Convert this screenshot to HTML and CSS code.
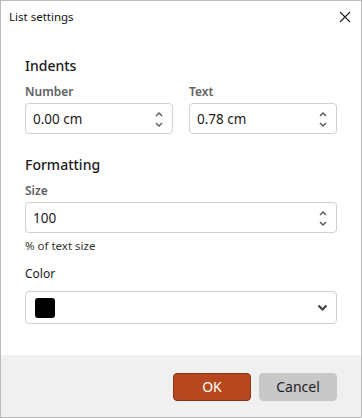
FILE: index.html
```html
<!DOCTYPE html>
<html lang="en">
<head>
    <meta charset="UTF-8">
    <meta name="viewport" content="width=device-width, initial-scale=1.0">
    <title>List settings</title>
    <link rel="stylesheet" href="styles.css">
</head>
<body>

    <div class="dialog">
        <div class="title-bar">
            <span class="title">List settings</span>
            <span class="close">
                <svg width="12" height="12" viewBox="0 0 12 12"><path d="M1 1 L11 11 M11 1 L1 11" stroke="#222" stroke-width="1.1" fill="none"/></svg>
            </span>
        </div>

        <div class="content">
            <h3 class="section">Indents</h3>
            <div class="row">
                <div class="field">
                    <label class="label">Number</label>
                    <div class="spin">
                        <span class="value">0.00 cm</span>
                        <span class="arrows">
                            <svg width="8" height="5" viewBox="0 0 8 5"><path d="M1 4 L4 1 L7 4" stroke="#555" stroke-width="1.4" fill="none"/></svg>
                            <svg width="8" height="5" viewBox="0 0 8 5"><path d="M1 1 L4 4 L7 1" stroke="#555" stroke-width="1.4" fill="none"/></svg>
                        </span>
                    </div>
                </div>
                <div class="field">
                    <label class="label">Text</label>
                    <div class="spin">
                        <span class="value">0.78 cm</span>
                        <span class="arrows">
                            <svg width="8" height="5" viewBox="0 0 8 5"><path d="M1 4 L4 1 L7 4" stroke="#555" stroke-width="1.4" fill="none"/></svg>
                            <svg width="8" height="5" viewBox="0 0 8 5"><path d="M1 1 L4 4 L7 1" stroke="#555" stroke-width="1.4" fill="none"/></svg>
                        </span>
                    </div>
                </div>
            </div>

            <h3 class="section second">Formatting</h3>
            <label class="label">Size</label>
            <div class="spin">
                <span class="value">100</span>
                <span class="arrows">
                    <svg width="8" height="5" viewBox="0 0 8 5"><path d="M1 4 L4 1 L7 4" stroke="#555" stroke-width="1.4" fill="none"/></svg>
                    <svg width="8" height="5" viewBox="0 0 8 5"><path d="M1 1 L4 4 L7 1" stroke="#555" stroke-width="1.4" fill="none"/></svg>
                </span>
            </div>
            <div class="hint">% of text size</div>

            <label class="label color-label">Color</label>
            <div class="select">
                <span class="swatch"></span>
                <svg width="11" height="7" viewBox="0 0 11 7"><path d="M1.5 1.5 L5.5 5.5 L9.5 1.5" stroke="#444" stroke-width="2.2" fill="none"/></svg>
            </div>
        </div>

        <div class="footer">
            <button class="btn btn-ok">OK</button>
            <button class="btn btn-cancel">Cancel</button>
        </div>
    </div>

</body>
</html>
```
FILE: styles.css
```css
body {
    margin: 0;
    font-family: "Noto Sans", "Open Sans", sans-serif;
    color: #1a1a1a;
    background: #fff;
}

.dialog {
    width: 362px;
    height: 418px;
    box-sizing: border-box;
    border: 1px solid #bcbcbc;
    display: flex;
    flex-direction: column;
}

.title-bar {
    height: 31px;
    flex-shrink: 0;
    display: flex;
    align-items: center;
    justify-content: space-between;
    padding: 0 10px 0 8px;
}

.title {
    font-size: 11.5px;
    color: #111;
}

.close {
    display: flex;
    padding-top: 1px;
}

.content {
    flex: 1;
    padding: 0 24px;
}

.section {
    margin: 24px 0 0;
    font-size: 14px;
    line-height: 20px;
    font-weight: 500;
    color: #1a1a1a;
}

.section.second {
    margin-top: 21px;
}

.row {
    display: flex;
    gap: 16px;
}

.field {
    flex: 1;
}

.label {
    display: block;
    margin-top: 8px;
    font-size: 12px;
    line-height: 16px;
    font-weight: 600;
    color: #616161;
}

.spin {
    margin-top: 3px;
    height: 31px;
    box-sizing: border-box;
    border: 1px solid #d1d1d1;
    border-radius: 4px;
    display: flex;
    align-items: center;
    justify-content: space-between;
    padding: 1px 9px 0 7px;
}

.value {
    font-size: 13.5px;
}

.arrows {
    display: flex;
    flex-direction: column;
    gap: 5px;
}

.arrows svg {
    display: block;
}

.hint {
    margin-top: 5px;
    font-size: 11.5px;
    line-height: 16px;
    color: #333;
}

.color-label {
    margin-top: 12px;
    font-weight: 400;
    color: #1a1a1a;
}

.select {
    margin-top: 9px;
    height: 33px;
    box-sizing: border-box;
    border: 1px solid #d1d1d1;
    border-radius: 4px;
    display: flex;
    align-items: center;
    justify-content: space-between;
    padding: 0 8px 0 9px;
}

.swatch {
    width: 20px;
    height: 20px;
    border-radius: 3px;
    background: #000;
}

.footer {
    height: 61px;
    flex-shrink: 0;
    background: #f0f0f0;
    display: flex;
    justify-content: flex-end;
    align-items: center;
    gap: 8px;
    padding: 1px 24px 0;
}

.btn {
    width: 78px;
    height: 28px;
    border-radius: 4px;
    font-family: "Noto Sans", "Open Sans", sans-serif;
    font-size: 14px;
    cursor: pointer;
}

.btn-ok {
    background-color: #b7471e;
    border: 1px solid #8c3516;
    color: #fff;
}

.btn-cancel {
    background-color: #c8c8c8;
    border: 1px solid #c8c8c8;
    color: #222;
}
```
